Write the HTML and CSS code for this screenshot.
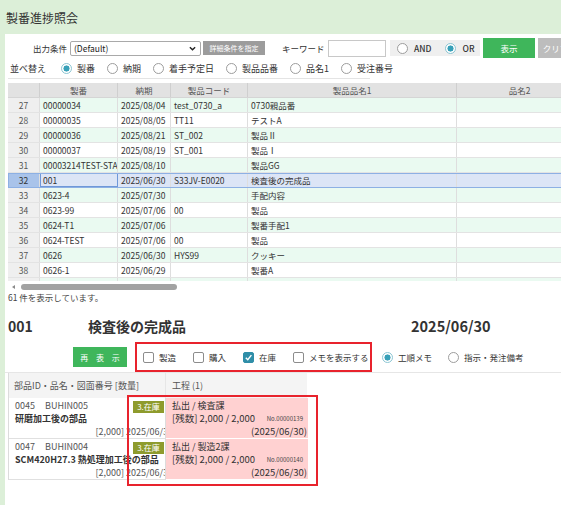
FILE: index.html
```html
<!DOCTYPE html>
<html lang="ja">
<head>
<meta charset="utf-8">
<title>製番進捗照会</title>
<link rel="stylesheet" href="styles.css">
</head>
<body>
<header class="page-title">製番進捗照会</header>
<main class="panel">
  <div class="cond-row">
    <span class="lbl-cond">出力条件</span>
    <div class="select"><span>(Default)</span><svg class="chev" viewBox="0 0 8 5" width="7" height="5"><polyline points="1,1 4,4 7,1" fill="none" stroke="#222" stroke-width="1.6"/></svg></div>
    <button class="btn-detail">詳細条件を指定</button>
    <span class="lbl-kw">キーワード</span>
    <div class="kw-input"></div>
    <div class="andor">
      <span class="opt"><span class="radio"></span>AND</span>
      <span class="opt"><span class="radio on"></span>OR</span>
    </div>
    <button class="btn btn-green btn-show">表示</button>
    <button class="btn btn-gray btn-clear">クリア</button>
  </div>

  <div class="sort-row">
    <span class="lbl-sort">並べ替え</span>
    <span class="opt"><span class="radio on"></span>製番</span>
    <span class="opt"><span class="radio"></span>納期</span>
    <span class="opt"><span class="radio"></span>着手予定日</span>
    <span class="opt"><span class="radio"></span>製品品番</span>
    <span class="opt"><span class="radio"></span>品名1</span>
    <span class="opt"><span class="radio"></span>受注番号</span>
  </div>

  <div class="grid">
    <div class="gr head"><div class="c n"></div><div class="c">製番</div><div class="c">納期</div><div class="c">製品コード</div><div class="c">製品品名1</div><div class="c">品名2</div></div>
    <div class="gr odd"><div class="c n">27</div><div class="c">00000034</div><div class="c">2025/08/04</div><div class="c">test_0730_a</div><div class="c">0730親品番</div><div class="c"></div></div>
    <div class="gr"><div class="c n">28</div><div class="c">00000035</div><div class="c">2025/08/05</div><div class="c">TT11</div><div class="c">テストA</div><div class="c"></div></div>
    <div class="gr odd"><div class="c n">29</div><div class="c">00000036</div><div class="c">2025/08/21</div><div class="c">ST_002</div><div class="c">製品Ⅱ</div><div class="c"></div></div>
    <div class="gr"><div class="c n">30</div><div class="c">00000037</div><div class="c">2025/08/19</div><div class="c">ST_001</div><div class="c">製品Ⅰ</div><div class="c"></div></div>
    <div class="gr odd"><div class="c n">31</div><div class="c">00003214TEST-STA</div><div class="c">2025/08/10</div><div class="c"></div><div class="c">製品GG</div><div class="c"></div></div>
    <div class="gr sel"><div class="c n">32</div><div class="c focus">001</div><div class="c">2025/06/30</div><div class="c">S33JV-E0020</div><div class="c">検査後の完成品</div><div class="c"></div></div>
    <div class="gr odd"><div class="c n">33</div><div class="c">0623-4</div><div class="c">2025/07/30</div><div class="c"></div><div class="c">手配内容</div><div class="c"></div></div>
    <div class="gr"><div class="c n">34</div><div class="c">0623-99</div><div class="c">2025/07/06</div><div class="c">00</div><div class="c">製品</div><div class="c"></div></div>
    <div class="gr odd"><div class="c n">35</div><div class="c">0624-T1</div><div class="c">2025/07/06</div><div class="c"></div><div class="c">製番手配1</div><div class="c"></div></div>
    <div class="gr"><div class="c n">36</div><div class="c">0624-TEST</div><div class="c">2025/07/06</div><div class="c">00</div><div class="c">製品</div><div class="c"></div></div>
    <div class="gr odd"><div class="c n">37</div><div class="c">0626</div><div class="c">2025/06/30</div><div class="c">HYS99</div><div class="c">クッキー</div><div class="c"></div></div>
    <div class="gr"><div class="c n">38</div><div class="c">0626-1</div><div class="c">2025/06/29</div><div class="c"></div><div class="c">製番A</div><div class="c"></div></div>
    <div class="gr odd"><div class="c n"></div><div class="c"></div><div class="c"></div><div class="c"></div><div class="c"></div><div class="c"></div></div>
  </div>
  <div class="hscroll"><span class="arrow"></span><span class="thumb"></span></div>
  <div class="count">61 件を表示しています。</div>

  <div class="detail-head">
    <span class="d-no">001</span>
    <span class="d-name">検査後の完成品</span>
    <span class="d-date">2025/06/30</span>
  </div>

  <div class="toolbar">
    <button class="btn btn-green btn-redisp">再 表 示</button>
    <div class="filter-box">
      <span class="chk"><span class="cb"></span>製造</span>
      <span class="chk"><span class="cb"></span>購入</span>
      <span class="chk"><span class="cb on"><svg viewBox="0 0 10 10" width="9" height="9"><polyline points="2,5.2 4.2,7.4 8.2,2.4" fill="none" stroke="#fff" stroke-width="1.6"/></svg></span>在庫</span>
      <span class="chk"><span class="cb"></span>メモを表示する</span>
    </div>
    <span class="opt memo"><span class="radio on"></span>工順メモ</span>
    <span class="opt memo"><span class="radio"></span>指示・発注備考</span>
  </div>

  <section class="parts">
    <div class="p-head"><div class="p-c1">部品ID・品名・図面番号 [数量]</div><div class="p-c2">工程 (1)</div></div>
    <div class="p-row">
      <div class="p-c1">
        <div class="p-id"><span>0045</span><span>BUHIN005</span></div>
        <div class="p-name">研磨加工後の部品</div>
        <div class="p-qty"><span>[2,000] 2025/06/30</span></div>
      </div>
      <div class="p-c2 proc">
        <span class="badge">3.在庫</span>
        <div>払出 / 検査課</div>
        <div class="rem"><span>[残数] 2,000 / 2,000</span><span class="pno">No.00000139</span></div>
        <div class="pdate">(2025/06/30)</div>
      </div>
    </div>
    <div class="p-row">
      <div class="p-c1">
        <div class="p-id"><span>0047</span><span>BUHIN004</span></div>
        <div class="p-name">SCM420H27.3 熱処理加工後の部品</div>
        <div class="p-qty"><span>[2,000] 2025/06/30</span></div>
      </div>
      <div class="p-c2 proc">
        <span class="badge">3.在庫</span>
        <div>払出 / 製造2課</div>
        <div class="rem"><span>[残数] 2,000 / 2,000</span><span class="pno">No.00000140</span></div>
        <div class="pdate">(2025/06/30)</div>
      </div>
    </div>
    <div class="hl-box"></div>
  </section>
</main>
</body>
</html>
```

FILE: styles.css
```css
html, body {
  margin: 0;
  padding: 0;
}
body {
  width: 561px;
  height: 505px;
  overflow: hidden;
  background: #dcefd8;
  font-family: "Noto Sans CJK JP", "Noto Sans", sans-serif;
  color: #333;
  font-size: 9px;
}
button {
  font-family: inherit;
  border: 0;
  padding: 0;
  cursor: pointer;
}

.page-title {
  height: 34px;
  box-sizing: border-box;
  padding: 10px 0 0 6px;
  font-size: 12px;
  line-height: 16px;
  color: #333;
}

.panel {
  margin-left: 5px;
  width: 640px;
  height: 471px;
  background: #fff;
  padding: 4px 0 0 3px;
  box-sizing: border-box;
}

/* condition row */
.cond-row {
  display: flex;
  align-items: center;
  height: 20px;
  font-size: 8.5px;
}
.cond-row > * { flex: none; white-space: nowrap; }
.lbl-cond { margin-left: 25px; width: 37px; }
.select {
  width: 131px;
  height: 15px;
  box-sizing: border-box;
  border: 1px solid #a9a9a9;
  border-radius: 2px;
  display: flex;
  align-items: center;
  justify-content: space-between;
  padding: 0 4px 0 3px;
  color: #222;
}
.btn-detail {
  margin-left: 2px;
  width: 62px;
  height: 14px;
  background: #9c9c9c;
  color: #fff;
  font-size: 7px;
}
.lbl-kw { margin-left: 17px; width: 46px; }
.kw-input {
  width: 58px;
  height: 17px;
  box-sizing: border-box;
  border: 1px solid #c8c8c8;
}
.andor {
  margin-left: 4px;
  width: 90px;
  height: 16px;
  background: #efefef;
  display: flex;
  align-items: center;
  padding-left: 7px;
  box-sizing: border-box;
  gap: 14px;
  font-weight: 500;
}
.andor .opt { gap: 6px; }
.btn {
  color: #fff;
  font-size: 8.5px;
}
.btn-green { background: #3fb65b; }
.btn-gray { background: #bdbdbd; }
.btn-show { margin-left: 3px; width: 52px; height: 20px; }
.btn-clear { margin-left: 3px; width: 35px; height: 20px; }

/* radios & checkboxes */
.opt {
  display: inline-flex;
  align-items: center;
  gap: 5px;
  white-space: nowrap;
  flex: none;
}
.radio {
  width: 11px;
  height: 11px;
  box-sizing: border-box;
  border: 1px solid #9d9d9d;
  border-radius: 50%;
  background: #fff;
  flex: none;
}
.radio.on {
  border-color: #8cc6d3;
  background: radial-gradient(circle, #37a0b8 0 2.8px, #fff 3.3px);
}
.chk {
  display: inline-flex;
  align-items: center;
  gap: 5px;
  white-space: nowrap;
  flex: none;
}
.cb {
  width: 11px;
  height: 11px;
  box-sizing: border-box;
  border: 1px solid #8c8c8c;
  border-radius: 2px;
  background: #fff;
  display: flex;
  align-items: center;
  justify-content: center;
  flex: none;
}
.cb.on {
  background: #2f8ea8;
  border-color: #2f8ea8;
}

/* sort row */
.sort-row {
  width: 362px;
  height: 20px;
  border-bottom: 1px solid #e4e4e4;
  display: flex;
  align-items: center;
  gap: 12px;
  margin-bottom: 4px;
  font-size: 9px;
  white-space: nowrap;
}
.lbl-sort { margin-left: 2px; margin-right: 3px; flex: none; }

/* data grid */
.grid {
  height: 198px;
  overflow: hidden;
  width: 575px;
}
.gr {
  display: grid;
  grid-template-columns: 32px 78px 53px 77px 209px 126px;
  height: 15px;
  box-sizing: border-box;
  border-bottom: 1px solid #e3e3e3;
  font-size: 8.5px;
  line-height: 14px;
}
.gr.odd { background: #eafaf1; }
.c {
  padding: 0 3px;
  border-right: 1px solid #dedede;
  white-space: nowrap;
  overflow: hidden;
  color: #333;
}
.c.n {
  background: #efefef;
  text-align: center;
  color: #555;
  padding: 0;
}
.gr.head {
  background: #e2e2e2;
  border-bottom: 1px solid #d5d5d5;
}
.gr.head .c {
  text-align: center;
  color: #555;
  border-right-color: #cfcfcf;
}
.gr.head .c.n { background: #e2e2e2; }
.gr.sel {
  background: #dce5f6;
  outline: 1px solid #8db0e4;
  outline-offset: -1px;
}
.gr.sel .c.n { background: #a9c3ea; color: #333; }
.c.focus {
  outline: 1px solid #6f98d8;
  outline-offset: -1px;
}

.hscroll {
  height: 11px;
  display: flex;
  align-items: center;
}
.hscroll .arrow {
  margin-left: 4px;
  width: 0;
  height: 0;
  border-top: 2.5px solid transparent;
  border-bottom: 2.5px solid transparent;
  border-right: 3px solid #8a8a8a;
}
.hscroll .thumb {
  margin-left: 6px;
  width: 156px;
  height: 6px;
  border-radius: 3px;
  background: #a2a2a2;
}
.count {
  height: 11px;
  line-height: 11px;
  font-size: 8.5px;
  color: #444;
}

/* detail */
.detail-head {
  margin-top: 12px;
  height: 20px;
  display: grid;
  grid-template-columns: 80px 323px auto;
  align-items: center;
  font-weight: 700;
  font-size: 14px;
  color: #333;
}
.d-date { font-size: 14.5px; }

.toolbar {
  margin-top: 7px;
  height: 30px;
  display: flex;
  align-items: center;
  font-size: 8.5px;
}
.btn-redisp {
  margin-left: 65px;
  width: 54px;
  height: 20px;
  font-size: 8px;
  letter-spacing: 3px;
  padding-left: 3px;
}
.filter-box {
  margin-left: 8px;
  width: 237px;
  height: 30px;
  box-sizing: border-box;
  border: 2px solid #e8232d;
  display: flex;
  align-items: center;
  padding-left: 6px;
  gap: 17px;
}
.toolbar .memo { margin-left: 10px; }
.toolbar .memo + .memo { margin-left: 16px; }

/* parts list */
.parts {
  position: relative;
  border-top: 1px solid #e6e6e6;
  margin-left: -3px;
  padding-left: 3px;
  height: 133px;
  box-sizing: border-box;
}
.p-head, .p-row {
  display: grid;
  grid-template-columns: 157px 142px;
  border-left: 1px solid #dcdcdc;
  width: 299px;
  box-sizing: border-box;
}
.p-head {
  height: 25px;
  background: #f4f4f4;
  align-items: center;
  font-size: 9px;
  color: #555;
}
.p-head .p-c1 { padding-left: 5px; border-right: 1px solid #e6e6e6; height: 100%; display: flex; align-items: center; }
.p-head .p-c2 { padding-left: 6px; }
.p-row {
  height: 41px;
}
.p-row .p-c1 {
  border-right: 1px solid #dcdcdc;
  border-bottom: 1px solid #e0e0e0;
  padding: 1px 0 0 6px;
  overflow: hidden;
  line-height: 13px;
  font-size: 9px;
}
.p-id { color: #555; display: flex; gap: 10px; }
.p-name { font-weight: 700; color: #333; white-space: nowrap; }
.p-qty {
  margin-right: -8px;
  text-align: right;
  color: #555;
  white-space: nowrap;
}
.proc {
  position: relative;
  background: #ffd1d1;
  margin-bottom: 1px;
  padding: 1px 1px 0 6px;
  line-height: 13px;
  font-size: 9px;
  color: #333;
}
.badge {
  position: absolute;
  right: calc(100% + 2px);
  top: 3px;
  width: 31px;
  height: 12px;
  line-height: 12px;
  background: #8e9b2d;
  color: #fff;
  font-size: 8px;
  text-align: center;
}
.rem {
  display: flex;
  justify-content: space-between;
  align-items: center;
  padding-right: 4px;
  font-size: 9.5px;
}
.pno { font-size: 6px; color: #444; }
.pdate { text-align: right; font-size: 9.5px; }

.hl-box {
  position: absolute;
  left: 122px;
  top: 22px;
  width: 191px;
  height: 91px;
  box-sizing: border-box;
  border: 2px solid #e8232d;
}
```
